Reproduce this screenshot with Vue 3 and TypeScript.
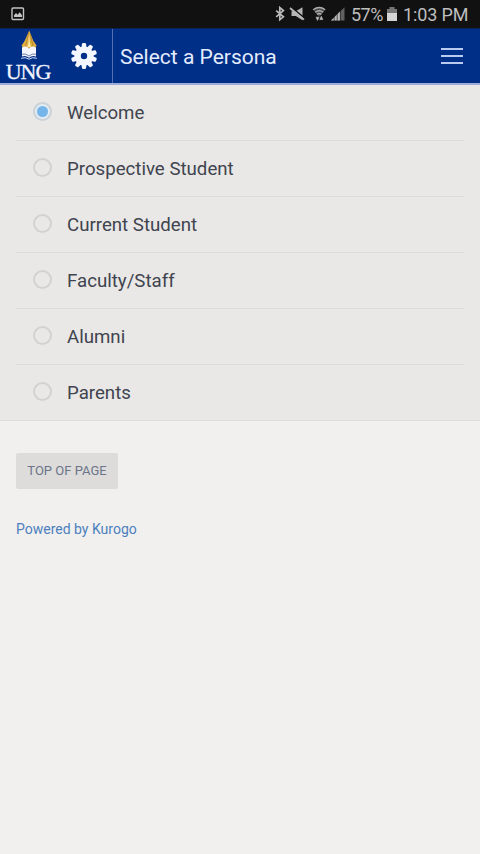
<script setup lang="ts">
import { ref } from 'vue'

const personas: string[] = [
  'Welcome',
  'Prospective Student',
  'Current Student',
  'Faculty/Staff',
  'Alumni',
  'Parents',
]
const selected = ref<string>('Welcome')
const teeth: number[] = Array.from({ length: 10 }, (_, i) => i * 36)

function toTop(): void {
  window.scrollTo({ top: 0 })
}
</script>

<template>
  <div class="screen">
    <div class="status">
      <svg class="picture" width="14" height="14" viewBox="0 0 14 14">
        <rect x="1" y="1" width="11.5" height="11.5" rx="1" fill="none" stroke="#c4c4c4" stroke-width="1.4" />
        <path d="M3 10V8.2L5 6l1.6 1.7L8.7 5.3 11 8.2V10z" fill="#c4c4c4" />
      </svg>
      <div class="indicators">
        <svg class="sys" width="72" height="18" viewBox="0 0 72 18">
          <path d="M2.2 5.6l7.2 6.2-3.6 3V2.6l3.6 3-7.2 6.2" fill="none" stroke="#b9b9b9" stroke-width="1.7" />
          <path d="M17.5 6.2h4.3L28.5 2.3v13l-6.7-4.2h-4.3z" fill="#b4b4b4" />
          <path d="M17.5 2.5L31 13.4" stroke="#111" stroke-width="1.6" />
          <path d="M16 3L30 14.6" stroke="#b9b9b9" stroke-width="1.8" />
          <path d="M39.2 4.8q6-4.4 12 0L45.2 12z" fill="#4c4c4c" />
          <path d="M39.2 4.8q6-4.6 12 0M41.2 7.2q4-3 8 0M43 9.4q2.2-1.7 4.4 0" fill="none" stroke="#b0b0b0" stroke-width="1.4" />
          <path d="M42 12.2h3l-1.5 3.2zM45.8 14.6h3l-1.5-3.4z" fill="#bdbdbd" stroke="#bdbdbd" stroke-width=".6" />
          <path d="M57 15.4L70.5 2.3V15.4z" fill="#606060" />
          <path d="M57 15.4l9-8.8V15.4z" fill="#b8b8b8" />
          <path d="M60.2 4v12M63.2 4v12M66.4 4v12" stroke="#161616" stroke-width=".6" />
        </svg>
        <span class="percent">57%</span>
        <svg class="battery" width="10" height="14" viewBox="0 0 10 14">
          <path d="M0 2h2.5V0h5v2H10v12H0z" fill="#777" />
          <path d="M0 6h10v8H0z" fill="#d4d4d4" />
        </svg>
        <span class="clock">1:03 PM</span>
      </div>
    </div>

    <header class="navbar">
      <div class="brand">
        <svg width="18" height="32" viewBox="0 0 18 32">
          <path d="M9.2 1.5L4.6 12 1.6 16.6 3 19h12l1.6-2.4L13.4 12z" fill="#dfae43" />
          <path d="M9 3l-.5 10.5L7.4 18h3.4L9.8 13z" fill="#fbe9a4" />
          <path d="M8.6 4L5.6 17M10 4l3 13" stroke="#a87824" stroke-width=".7" fill="none" />
          <path d="M2 18.4q4-2.4 7 1 3-3.4 7-1v9q-4-1.4-7 1.4-3-2.8-7-1.4z" fill="#f5f6fb" />
          <path d="M2 25.2q4-1 7 1.8 3-2.8 7-1.8" stroke="#4a62a6" stroke-width=".8" fill="none" />
          <path d="M1.2 29.3q4.5-1.6 7.8.9 3.3-2.5 7.8-.9" stroke="#dbe2f7" stroke-width="1" fill="none" />
        </svg>
        <span class="wordmark">UNG</span>
      </div>
      <button class="gear" aria-label="Settings">
        <svg width="28" height="28" viewBox="-14 -14 28 28">
          <path
            v-for="angle in teeth"
            :key="angle"
            d="M-2.7-8L-2-12.2Q-1.8-13-1-13H1Q1.8-13 2-12.2L2.7-8z"
            fill="#f4f7ff"
            :transform="`rotate(${angle})`"
          />
          <circle r="6.4" fill="none" stroke="#f4f7ff" stroke-width="6.4" />
        </svg>
      </button>
      <h1>Select a Persona</h1>
      <button class="menu" aria-label="Menu"><i></i><i></i><i></i></button>
    </header>

    <main>
      <div class="list">
        <label v-for="name in personas" :key="name" class="row">
          <input v-model="selected" type="radio" name="persona" :value="name" />
          <span>{{ name }}</span>
        </label>
      </div>
      <button class="top" @click="toTop">TOP OF PAGE</button>
      <div class="powered"><a>Powered by Kurogo</a></div>
    </main>
  </div>
</template>

<style>
body {
  background: #f1f0ee;
}
</style>

<style scoped>
.screen {
  min-height: 854px;
  box-sizing: border-box;
  background: #f1f0ee;
  font-family: Roboto, 'Liberation Sans', sans-serif;
  color: #40444f;
}
button {
  border: 0;
  padding: 0;
  background: none;
  font-family: inherit;
}
.status {
  height: 28px;
  background: #111;
  display: flex;
  align-items: center;
  justify-content: space-between;
  padding: 0 13px 0 11px;
  box-sizing: border-box;
  color: #bebebe;
  font-size: 18px;
}
.indicators {
  display: flex;
  align-items: center;
  white-space: nowrap;
}
.sys {
  margin-right: 5px;
}
.percent {
  width: 32px;
  margin-right: 4px;
  letter-spacing: -0.5px;
}
.battery {
  margin-right: 6px;
}
.clock {
  width: 64px;
  letter-spacing: -0.15px;
}
.navbar {
  height: 57px;
  box-sizing: border-box;
  border-top: 1px solid #0b2358;
  border-bottom: 2px solid #9eabd8;
  background: #002f87;
  display: flex;
}
.brand {
  width: 56px;
  display: flex;
  flex-direction: column;
  align-items: center;
}
.brand svg {
  margin-left: 2px;
}
.wordmark {
  margin-top: 1px;
  font: 22px/20px 'Liberation Serif', serif;
  letter-spacing: -1px;
  color: #f2f5ff;
  -webkit-text-stroke: 0.3px #f2f5ff;
}
.gear {
  width: 57px;
  box-sizing: border-box;
  border-right: 1px solid #5470b2;
  display: flex;
  align-items: center;
  justify-content: center;
}
h1 {
  margin: 0;
  padding-left: 7px;
  flex: 1;
  font-size: 21px;
  font-weight: 400;
  line-height: 56px;
  color: #e4ecff;
  white-space: nowrap;
}
.menu {
  width: 56px;
  display: flex;
  flex-direction: column;
  align-items: center;
  justify-content: center;
  gap: 5px;
}
.menu i {
  width: 22px;
  height: 2px;
  background: #bacbf2;
}
.list {
  padding: 0 16px;
  background: #e9e8e6;
  border-bottom: 1px solid #dedddb;
}
.row {
  height: 56px;
  box-sizing: border-box;
  border-bottom: 1px solid #dddcda;
  padding: 0 0 0 17px;
  display: flex;
  align-items: center;
  gap: 15px;
  font-size: 18.67px;
}
.row:last-child {
  height: 55px;
  border-bottom: 0;
}
.row input {
  appearance: none;
  width: 19px;
  height: 19px;
  margin: 0 0 2px;
  box-sizing: border-box;
  border: 2px solid #d3d2d0;
  border-radius: 50%;
  display: grid;
  place-items: center;
}
.row input:checked {
  border-color: #cbd2d8;
  background: #e3ecf3;
}
.row input:checked::before {
  content: '';
  width: 11px;
  height: 11px;
  border-radius: 50%;
  background: #75b5e9;
}
.top {
  display: block;
  margin: 32px 0 0 16px;
  width: 102px;
  height: 36px;
  padding-bottom: 1px;
  border-radius: 2px;
  background: #dddcda;
  color: #6b7489;
  font-size: 13px;
}
.powered {
  margin: 31px 0 0 16px;
  font-size: 14px;
  line-height: 18px;
  color: #4c80bf;
}
</style>
